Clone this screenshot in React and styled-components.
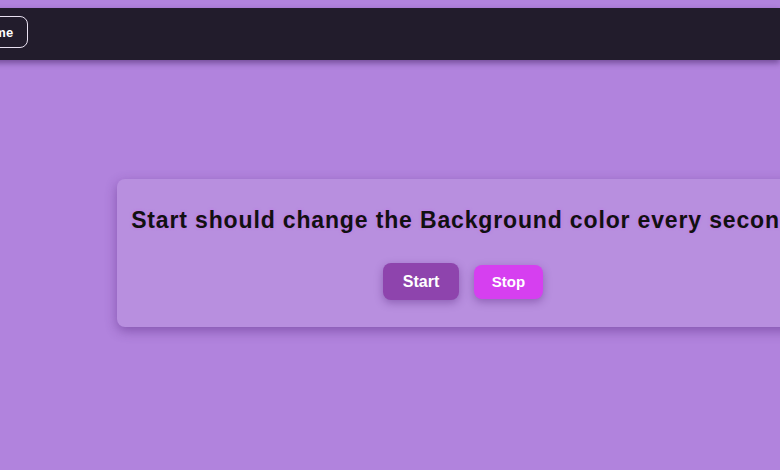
import styled, { createGlobalStyle } from "styled-components";

const Global = createGlobalStyle`
  html, body {
    margin: 0;
    padding: 0;
    background: #b183dd;
    font-family: "Liberation Sans", Arial, sans-serif;
    overflow: hidden;
  }
`;

const Page = styled.div`
  padding-top: 8px;
  min-height: 462px;
`;

const Nav = styled.nav`
  height: 52px;
  margin-left: -54px;
  padding-left: 16px;
  display: flex;
  align-items: center;
  background: #221c2c;
  box-shadow: 0 3px 6px rgba(40, 10, 70, 0.45);
`;

const NavButton = styled.button`
  height: 32px;
  margin-bottom: 4px;
  padding: 0 14px;
  border: 1px solid #e8e0f0;
  border-radius: 8px;
  background: transparent;
  color: #fff;
  font-family: "Liberation Sans", Arial, sans-serif;
  font-size: 13px;
  font-weight: 700;
`;

const Main = styled.main`
  padding: 119px 0 0 117px;
`;

const Card = styled.section`
  width: 692px;
  height: 148px;
  box-sizing: border-box;
  padding-top: 28px;
  border-radius: 8px;
  background: #b88fdf;
  box-shadow: 0 4px 12px rgba(80, 30, 120, 0.45);
  display: flex;
  flex-direction: column;
  align-items: center;
`;

const Title = styled.h2`
  margin: 0;
  font-size: 23px;
  font-weight: 700;
  letter-spacing: 0.85px;
  color: #111;
  white-space: nowrap;
  text-shadow: 0 0 3px rgba(200, 90, 240, 0.6);
`;

const Actions = styled.div`
  margin-top: 29px;
  display: flex;
  align-items: center;
  gap: 15px;
`;

const Btn = styled.button`
  height: ${(p) => (p.$primary ? "37px" : "34px")};
  width: ${(p) => (p.$primary ? "76px" : "69px")};
  border: none;
  border-radius: 8px;
  background: ${(p) => (p.$primary ? "#8e44ad" : "#d63ff0")};
  color: #fff;
  font-family: "Liberation Sans", Arial, sans-serif;
  font-size: ${(p) => (p.$primary ? "16px" : "15px")};
  font-weight: 700;
  box-shadow: 0 3px 8px rgba(80, 30, 120, 0.4);
`;

export default function App() {
  return (
    <Page>
      <Global />
      <Nav>
        <NavButton>Home</NavButton>
      </Nav>
      <Main>
        <Card>
          <Title>Start should change the Background color every second</Title>
          <Actions>
            <Btn $primary>Start</Btn>
            <Btn>Stop</Btn>
          </Actions>
        </Card>
      </Main>
    </Page>
  );
}
